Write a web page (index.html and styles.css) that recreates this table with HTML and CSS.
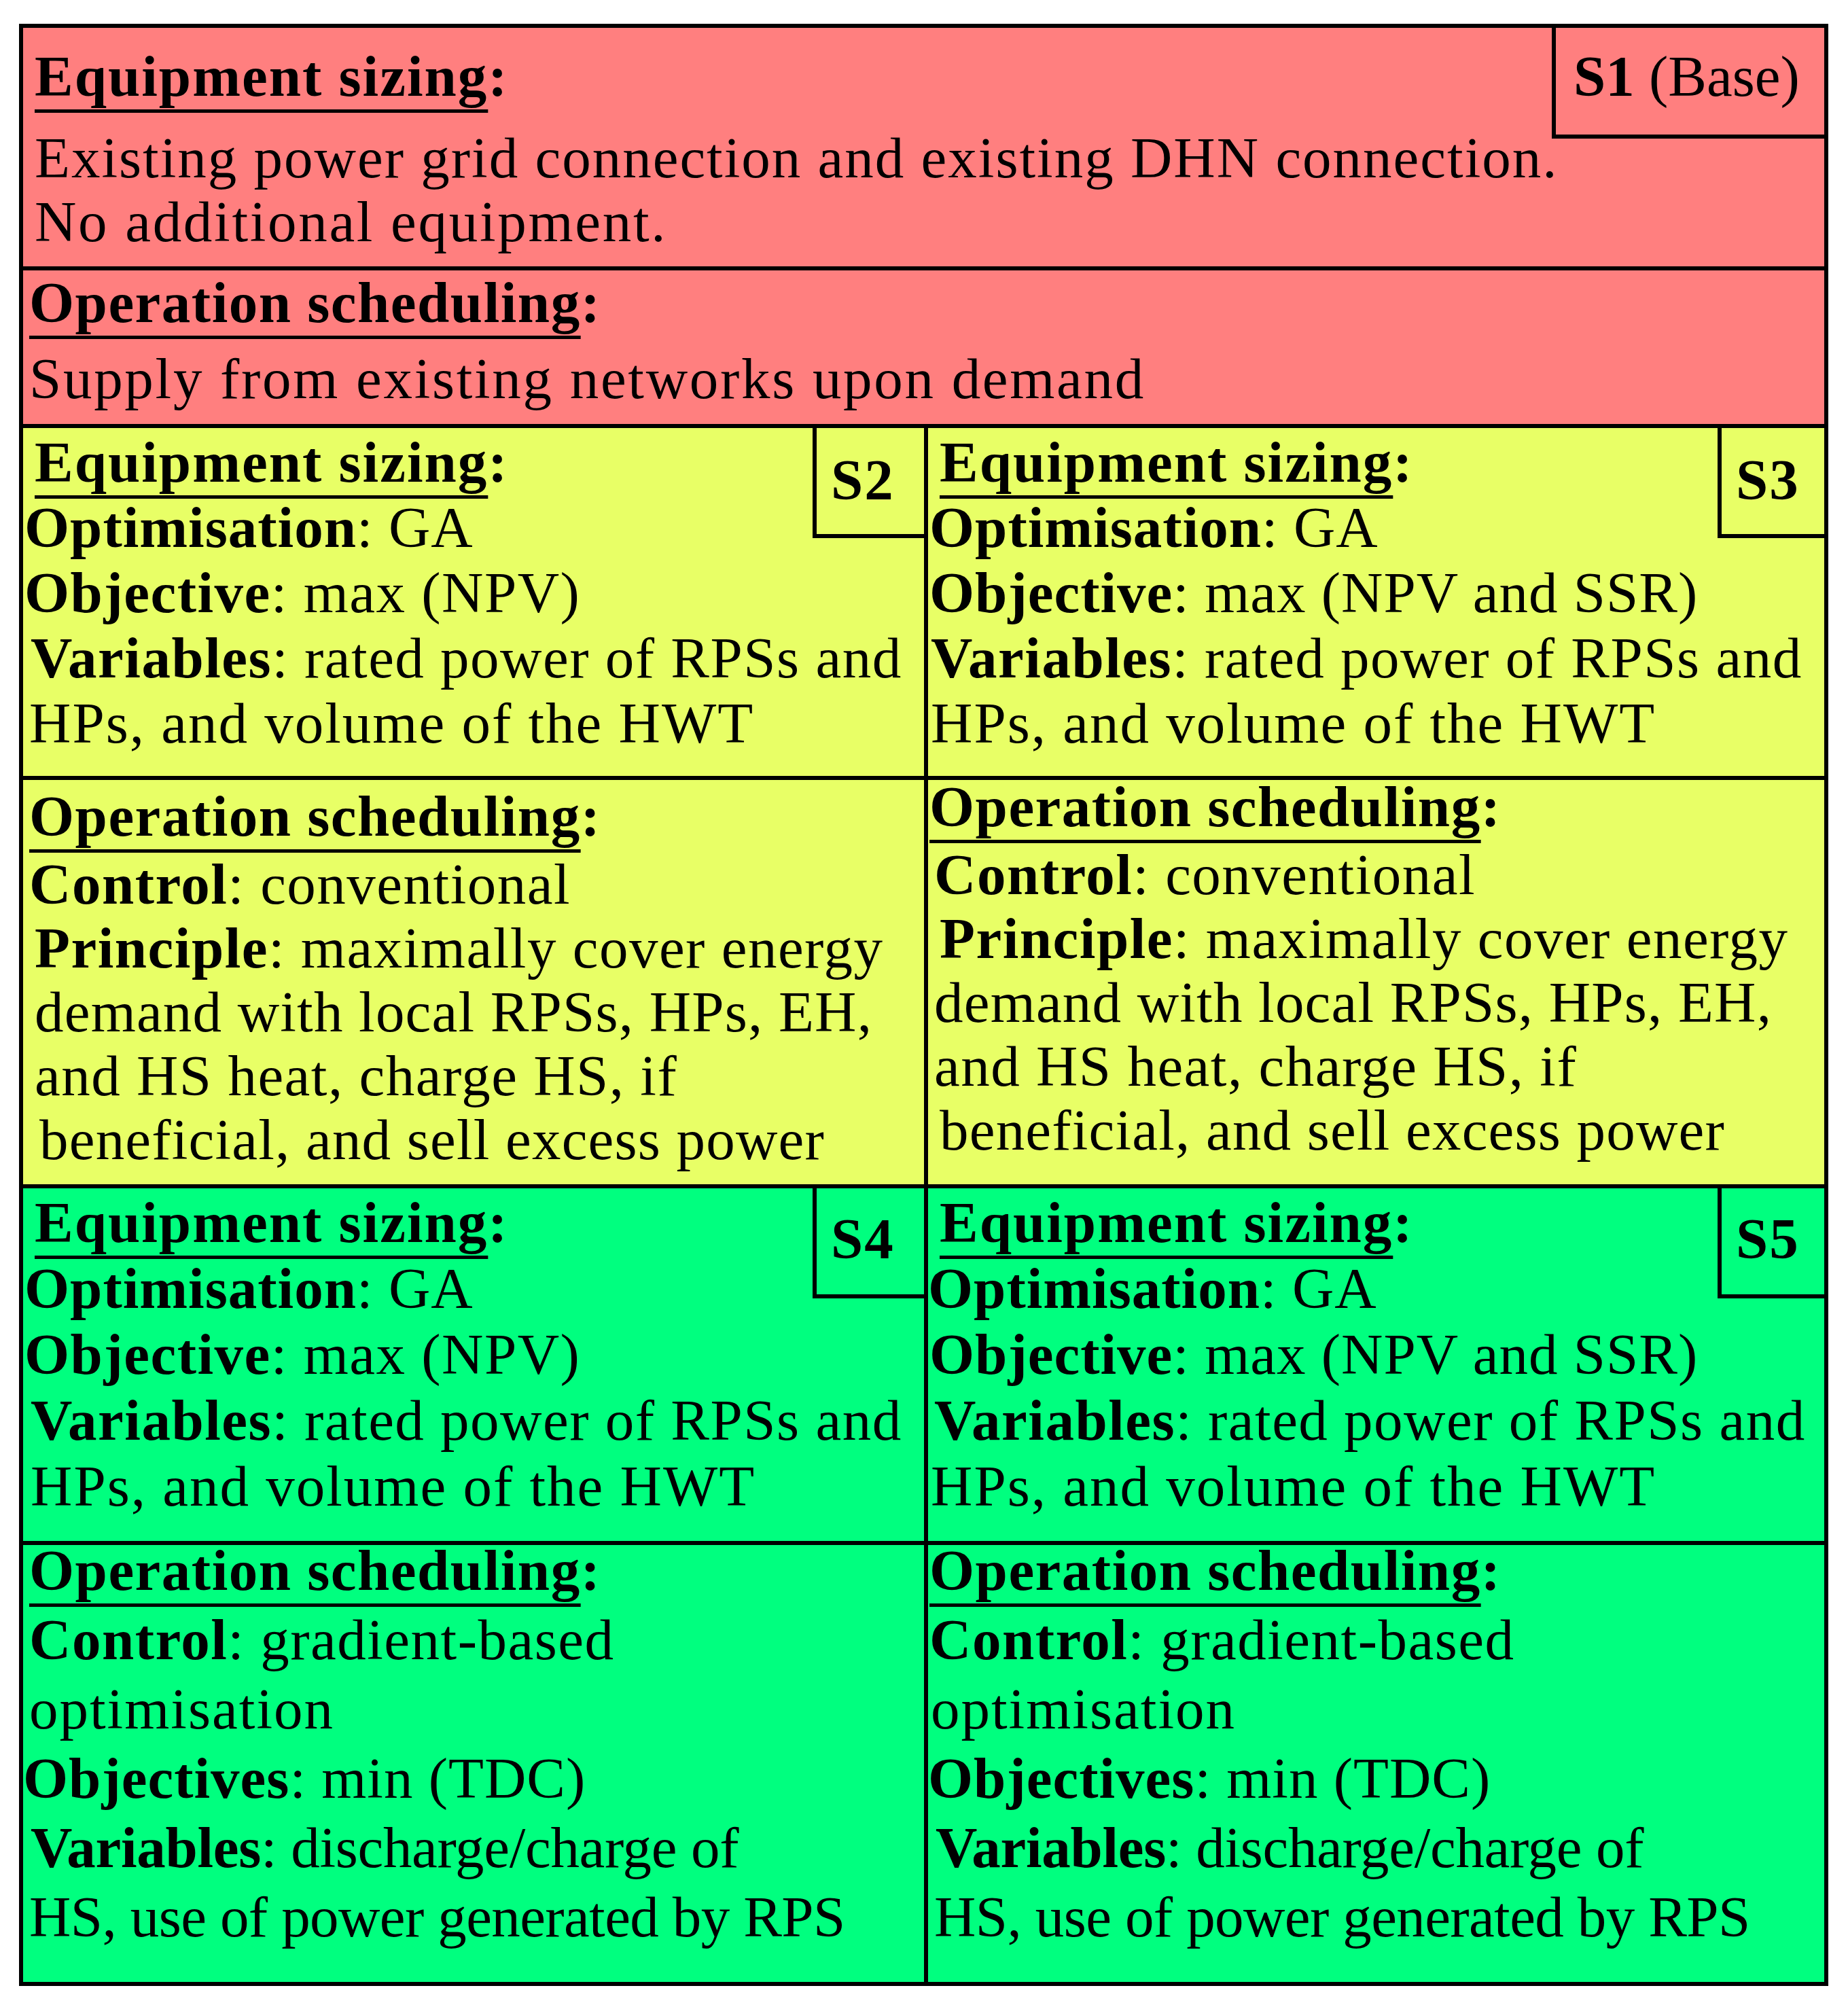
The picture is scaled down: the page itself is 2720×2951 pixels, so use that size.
FILE: index.html
```html
<!DOCTYPE html>
<html lang="en">
<head>
<meta charset="utf-8">
<title>Scenarios S1–S5</title>
<link rel="stylesheet" href="styles.css">
</head>
<body>
<main class="sheet">
  <section class="cell red span r1">
    <div class="badge b-s1"><b>S1</b> (Base)</div>
    <div class="ln hd lm"><span class="ul">Equipment sizing</span>:</div>
    <div class="ln lm">Existing power grid connection and existing DHN connection.</div>
    <div class="ln lw">No additional equipment.</div>
  </section>
  <section class="cell red span r2">
    <div class="ln hd"><span class="ul">Operation scheduling</span>:</div>
    <div class="ln lw">Supply from existing networks upon demand</div>
  </section>

  <section class="cell yellow eq">
    <div class="badge b-left b-top"><b>S2</b></div>
    <div class="ln hd lm i18"><span class="ul">Equipment sizing</span>:</div>
    <div class="ln lt i3"><b>Optimisation</b>: GA</div>
    <div class="ln i3"><b>Objective</b>: max (NPV)</div>
    <div class="ln i12"><b>Variables</b>: rated power of RPSs and</div>
    <div class="ln lm i10">HPs, and volume of the HWT</div>
  </section>
  <section class="cell yellow eq">
    <div class="badge b-right b-top"><b>S3</b></div>
    <div class="ln hd lm i18"><span class="ul">Equipment sizing</span>:</div>
    <div class="ln lt i3"><b>Optimisation</b>: GA</div>
    <div class="ln lt i3"><b>Objective</b>: max (NPV and SSR)</div>
    <div class="ln i5"><b>Variables</b>: rated power of RPSs and</div>
    <div class="ln lm i5">HPs, and volume of the HWT</div>
  </section>

  <section class="cell yellow op-y">
    <div class="ln hd i10 first-l"><span class="ul">Operation scheduling</span>:</div>
    <div class="ln i10"><b>Control</b>: conventional</div>
    <div class="ln i18"><b>Principle</b>: maximally cover energy</div>
    <div class="ln ls i18">demand with local RPSs, HPs, EH,</div>
    <div class="ln i18">and HS heat, charge HS, if</div>
    <div class="ln ls i25">beneficial, and sell excess power</div>
  </section>
  <section class="cell yellow op-y">
    <div class="ln hd i3 first-r"><span class="ul">Operation scheduling</span>:</div>
    <div class="ln i10"><b>Control</b>: conventional</div>
    <div class="ln i18"><b>Principle</b>: maximally cover energy</div>
    <div class="ln ls i10">demand with local RPSs, HPs, EH,</div>
    <div class="ln i10">and HS heat, charge HS, if</div>
    <div class="ln ls i18">beneficial, and sell excess power</div>
  </section>

  <section class="cell green eq-g">
    <div class="badge b-left b-low"><b>S4</b></div>
    <div class="ln hd lm i18"><span class="ul">Equipment sizing</span>:</div>
    <div class="ln lt i3"><b>Optimisation</b>: GA</div>
    <div class="ln i3"><b>Objective</b>: max (NPV)</div>
    <div class="ln i12"><b>Variables</b>: rated power of RPSs and</div>
    <div class="ln lm i12">HPs, and volume of the HWT</div>
  </section>
  <section class="cell green eq-g">
    <div class="badge b-right b-low"><b>S5</b></div>
    <div class="ln hd lm i18"><span class="ul">Equipment sizing</span>:</div>
    <div class="ln lt i0"><b>Optimisation</b>: GA</div>
    <div class="ln lt i3"><b>Objective</b>: max (NPV and SSR)</div>
    <div class="ln i10"><b>Variables</b>: rated power of RPSs and</div>
    <div class="ln lm i5">HPs, and volume of the HWT</div>
  </section>

  <section class="cell green op-g">
    <div class="ln hd i10 first-g"><span class="ul">Operation scheduling</span>:</div>
    <div class="ln i10"><b>Control</b>: gradient-based</div>
    <div class="ln lm i10">optimisation</div>
    <div class="ln lt i0"><b>Objectives</b>: min (TDC)</div>
    <div class="ln lx i12"><b>Variables</b>: discharge/charge of</div>
    <div class="ln lxx i10">HS, use of power generated by RPS</div>
  </section>
  <section class="cell green op-g">
    <div class="ln hd i3 first-g"><span class="ul">Operation scheduling</span>:</div>
    <div class="ln i3"><b>Control</b>: gradient-based</div>
    <div class="ln lm i5">optimisation</div>
    <div class="ln lt i0"><b>Objectives</b>: min (TDC)</div>
    <div class="ln lx i12"><b>Variables</b>: discharge/charge of</div>
    <div class="ln lxx i10">HS, use of power generated by RPS</div>
  </section>
</main>
</body>
</html>
```
FILE: styles.css
```css
html, body {
  margin: 0;
  padding: 0;
  background: #ffffff;
}

body {
  font-family: "Liberation Serif", "Times New Roman", serif;
  font-size: 85px;
  letter-spacing: 1.5px;
  color: #000000;
}

.sheet {
  display: grid;
  grid-template-columns: 1326px 1319px;
  grid-template-rows: 351px 226px 512px 595px 519px 643px;
  gap: 6px;
  width: max-content;
  margin: 35px 0 0 28px;
  background: #000000;
  border: 6px solid #000000;
}

.cell {
  position: relative;
  white-space: nowrap;
  --lh: 94px;
}

.span {
  grid-column: 1 / span 2;
}

.red { background: #ff7f7f; }
.yellow { background: #e8ff66; }
.green { background: #00ff7f; }

.ln {
  line-height: var(--lh);
}

.hd {
  font-weight: 700;
}

.ul {
  text-decoration: underline;
  text-decoration-thickness: 5px;
  text-underline-offset: 20px;
  text-decoration-skip-ink: none;
}

b {
  font-weight: 700;
}

/* per-line tracking, following the uneven spacing of the original */
.lw { letter-spacing: 2.7px; }
.lm { letter-spacing: 2px; }
.ls { letter-spacing: 1.2px; }
.lt { letter-spacing: 1px; }
.lx { letter-spacing: -0.3px; }
.lxx { letter-spacing: -0.6px; }

/* red band */
.r1 {
  padding: 24px 0 0 17px;
}
.r1 .hd {
  margin-bottom: 26px;
}
.r2 {
  padding: 0 0 0 9px;
}
.r2 .hd {
  margin-bottom: 18px;
}

/* equipment cells */
.eq {
  --lh: 96px;
  padding-top: 2px;
}
.eq-g {
  --lh: 97px;
  padding-top: 2px;
}

/* operation cells */
.op-y {
  --lh: 94px;
}
.op-y .hd {
  margin-bottom: 6px;
}
.first-l {
  margin-top: 6px;
}
.first-r {
  margin-top: -8px;
}
.op-g {
  --lh: 102px;
}
.first-g {
  margin-top: -14px;
}

/* line indents */
.i0 { padding-left: 0; }
.i3 { padding-left: 2px; }
.i5 { padding-left: 4px; }
.i10 { padding-left: 9px; }
.i12 { padding-left: 11px; }
.i18 { padding-left: 17px; }
.i25 { padding-left: 24px; }

/* scenario badges */
.badge {
  position: absolute;
  top: 0;
  right: 0;
  box-sizing: border-box;
  height: 162px;
  border-left: 6px solid #000000;
  border-bottom: 6px solid #000000;
  line-height: 94px;
  padding-left: 21px;
  letter-spacing: 2px;
  z-index: 1;
}
.b-s1 {
  width: 401px;
  height: 163px;
  padding-left: 26px;
  padding-top: 24px;
  letter-spacing: 0;
}
.b-left { width: 164px; }
.b-right { width: 157px; }
.b-top { padding-top: 29px; }
.b-low { padding-top: 27px; }
```
